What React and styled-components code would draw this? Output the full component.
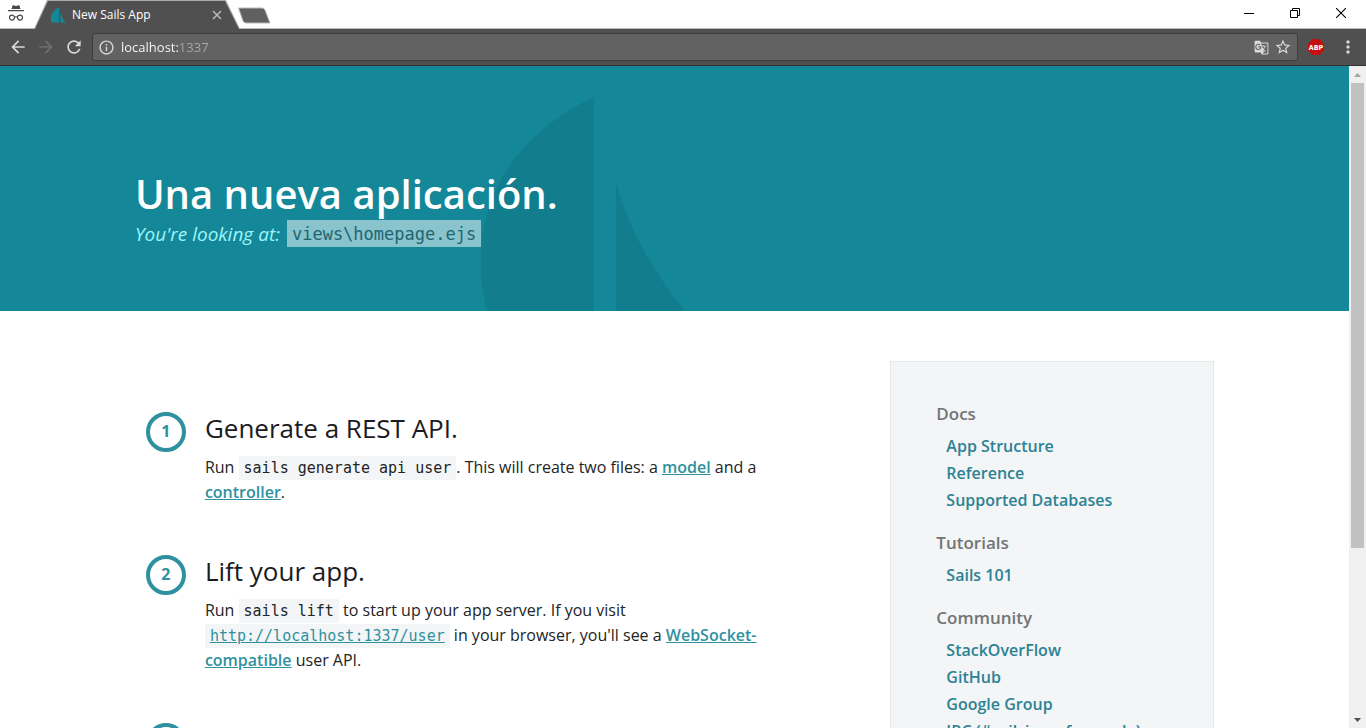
import React from 'react';
import styled, { createGlobalStyle } from 'styled-components';
import {
  MdArrowBack,
  MdArrowForward,
  MdRefresh,
  MdInfoOutline,
  MdGTranslate,
  MdStarBorder,
  MdMoreVert,
} from 'react-icons/md';

const sans = '"Open Sans", "Noto Sans", sans-serif';
const mono = '"DejaVu Sans Mono", "Liberation Mono", monospace';

const GlobalStyle = createGlobalStyle`
  *, *::before, *::after { box-sizing: border-box; }
  body { margin: 0; background: #fff; font-family: ${sans}; }
  h1, h2, h3, p, ul, ol { margin: 0; padding: 0; }
  ul, ol { list-style: none; }
  button { padding: 0; border: 0; background: none; font: inherit; color: inherit; }
  svg { display: block; }
`;

const Window = styled.div`
  display: flex;
  flex-direction: column;
  height: 100vh;
  overflow: hidden;
`;

/* Browser frame */

const TabStrip = styled.div`
  display: flex;
  flex: none;
  height: 29px;
  padding-left: 8px;
  background: linear-gradient(to top, #b9b9b9 1px, #fff 1px);
`;

const Incognito = styled.svg`
  flex: none;
  margin: 5px 10px 0 0;
`;

const TabEdge = styled.div`
  flex: none;
  width: 206px;
  padding-top: 1px;
  background: #a9a9a9;
  clip-path: polygon(13px 0, calc(100% - 14px) 0, 100% 100%, 0 100%);
`;

const Tab = styled.div`
  display: flex;
  align-items: center;
  height: 28px;
  padding: 0 18px 0 16px;
  background: #505050;
  color: #fff;
  font-size: 12px;
  line-height: 26px;
  clip-path: polygon(14px 0, calc(100% - 15px) 0, calc(100% - 1px) 100%, 1px 100%);
`;

const TabTitle = styled.span`
  flex: 1;
  margin-left: 6px;
`;

const NewTab = styled.button`
  flex: none;
  width: 34px;
  height: 17px;
  margin: 7px 0 0 -3px;
`;

const WindowButtons = styled.div`
  display: flex;
  align-items: flex-start;
  margin-left: auto;
  padding-right: 2px;
`;

const WindowButton = styled.button`
  display: grid;
  place-items: center;
  width: 46px;
  height: 26px;
`;

const Toolbar = styled.div`
  display: flex;
  flex: none;
  align-items: center;
  height: 37px;
  padding: 0 4px 0 9px;
  border-bottom: 1px solid #303030;
  background: #505050;
`;

const ToolButton = styled.button`
  display: grid;
  flex: none;
  place-items: center;
  width: ${({ $width }) => $width || 28}px;
  height: 28px;
  color: ${({ $dim }) => ($dim ? '#6f6f6f' : '#d9d9d9')};
`;

const NavButtons = styled.div`
  display: flex;
  margin: 0 4px 0 -5px;
`;

const AddressBar = styled.form`
  display: flex;
  flex: 1;
  align-items: center;
  height: 28px;
  padding: 0 3px 0 5px;
  border: 1px solid #3c3c3c;
  border-radius: 3px;
  background: #626262;
  color: #d9d9d9;
`;

const AddressInput = styled.input`
  flex: 1;
  min-width: 0;
  height: 22px;
  margin-left: 6px;
  padding: 0;
  border: 0;
  outline: 0;
  background: linear-gradient(to right, #fff 59px, #a8a8a8 59px);
  background-clip: text;
  -webkit-text-fill-color: transparent;
  font: 13px/22px ${sans};
`;

/* Page */

const Viewport = styled.div`
  display: flex;
  flex: 1;
  min-height: 0;
`;

const Page = styled.div`
  flex: 1;
  min-width: 0;
  overflow: hidden;
`;

const ScrollTrack = styled.div`
  display: flex;
  flex: none;
  flex-direction: column;
  align-items: center;
  width: 17px;
  background: #f0f0f0;
`;

const ScrollArrow = styled.button`
  display: grid;
  flex: none;
  place-items: center;
  width: 17px;
  height: 17px;
  color: ${({ $dim }) => ($dim ? '#a3a3a3' : '#505050')};
`;

const ScrollLane = styled.div`
  flex: 1;
  width: 13px;
`;

const ScrollThumb = styled.div`
  height: 74%;
  background: #c1c1c1;
`;

const Hero = styled.header`
  position: relative;
  padding: 103px 10% 63px;
  background: #148898;
`;

const SailMark = styled.svg`
  position: absolute;
  bottom: 0;
  left: calc(50% - 194px);
`;

const HeroText = styled.div`
  position: relative;
`;

const HeroTitle = styled.h1`
  margin-bottom: 1px;
  color: #fff;
  font-size: 40px;
  font-weight: 600;
  line-height: 50px;
`;

const HeroNote = styled.p`
  display: flex;
  align-items: flex-start;
  gap: 7px;
  color: #9df5fb;
  font-size: 19px;
  font-style: italic;
  line-height: 28px;
`;

const HeroPath = styled.code`
  padding: 1px 5px 0;
  background: #89c3cb;
  color: #1c6673;
  font-family: ${mono};
  font-size: 17px;
  font-style: normal;
  line-height: 26px;
`;

const Content = styled.main`
  display: grid;
  grid-template-columns: 60% 30%;
  justify-content: space-between;
  align-items: start;
  padding: 50px 10% 0;
`;

const Steps = styled.ol`
  display: grid;
  gap: 50px;
  padding: 51px 0 50px 11px;
`;

const Step = styled.li`
  display: flex;
  align-items: flex-start;
  gap: 19px;
`;

const StepNumber = styled.span`
  flex: none;
  width: 40px;
  height: 40px;
  border: 4px solid #2f919f;
  border-radius: 50%;
  color: #2f919f;
  font-size: 16px;
  font-weight: 700;
  line-height: 31px;
  text-align: center;
`;

const StepTitle = styled.h2`
  margin-bottom: 11px;
  color: #1a1c1e;
  font-size: 26px;
  font-weight: 400;
  line-height: 32px;
`;

const StepText = styled.p`
  color: #222426;
  font-size: 16px;
  line-height: 25px;
`;

const Code = styled.code`
  padding: 3px 5px;
  background: #f4f5f7;
  font-family: ${mono};
  font-size: 15px;
  line-height: 18px;
`;

const TextLink = styled.a`
  color: #2f919f;
  font-weight: ${({ $plain }) => ($plain ? 400 : 600)};
  text-decoration: underline;
`;

const Sidebar = styled.aside`
  padding: 38px 45px;
  border: 1px solid #e5e8e8;
  background: #f3f5f7;
`;

const LinkGroup = styled.section`
  margin-bottom: 15px;
  font-size: 16px;
`;

const GroupTitle = styled.h3`
  margin-bottom: 5px;
  color: #727476;
  font-size: 17px;
  font-weight: 600;
  line-height: 28px;
`;

const GroupLinks = styled.ul`
  padding-left: 10px;
  line-height: 27px;
  white-space: nowrap;
`;

const SideLink = styled.a`
  color: #2c8294;
  font-weight: 600;
  text-decoration: none;
`;

const groups = [
  { title: 'Docs', links: ['App Structure', 'Reference', 'Supported Databases'] },
  { title: 'Tutorials', links: ['Sails 101'] },
  { title: 'Community', links: ['StackOverFlow', 'GitHub', 'Google Group', 'IRC (#sailsjs on freenode)'] },
];

const steps = [
  {
    title: 'Generate a REST API.',
    body: (
      <>
        Run <Code>sails generate api user</Code>. This will create two files: a{' '}
        <TextLink href="#model">model</TextLink> and a <TextLink href="#controller">controller</TextLink>.
      </>
    ),
  },
  {
    title: 'Lift your app.',
    body: (
      <>
        Run <Code>sails lift</Code> to start up your app server. If you visit{' '}
        <Code><TextLink $plain href="#user">http://localhost:1337/user</TextLink></Code> in your browser, you'll see a{' '}
        <TextLink href="#websocket">WebSocket-compatible</TextLink> user API.
      </>
    ),
  },
  { title: 'Dive in.', body: null },
];

function IncognitoIcon() {
  return (
    <Incognito width="16" height="16" viewBox="0 0 16 16" aria-hidden="true">
      <path fill="#4a4a4a" d="M4.5 0.5 Q5 0 6 0.4 L8 0.9 L10 0.4 Q11 0 11.5 0.5 L12.5 4 H3.5 Z M0 5 H16 V6.3 H0 Z" />
      <g fill="none" stroke="#4a4a4a" strokeWidth="1.2">
        <circle cx="4" cy="12.6" r="2.5" />
        <circle cx="12" cy="12.6" r="2.5" />
        <path d="M6.4 12.3 Q8 11.2 9.6 12.3" />
      </g>
    </Incognito>
  );
}

function BrowserFrame() {
  return (
    <>
      <TabStrip>
        <IncognitoIcon />
        <TabEdge>
          <Tab>
            <svg width="16" height="16" viewBox="0 0 16 16" aria-hidden="true">
              <path fill="#148898" d="M9 0.5 V15.5 H1.5 C-0.5 9 3 3 9 0.5 Z M10.3 5 C11.2 9 13 12.5 15.8 15.5 H10.3 Z" />
            </svg>
            <TabTitle>New Sails App</TabTitle>
            <button type="button" aria-label="Close tab">
              <svg width="10" height="10" viewBox="0 0 10 10" stroke="#b4b4b4" strokeWidth="1.6">
                <path d="M1 1 L9 9 M9 1 L1 9" />
              </svg>
            </button>
          </Tab>
        </TabEdge>
        <NewTab type="button" aria-label="New tab">
          <svg width="34" height="17" viewBox="0 0 34 17">
            <path d="M1.5 1 H25 Q27 1 28 3 L33 16 H9 Q7 16 6 14 Z" fill="#606060" stroke="#b9b9b9" />
          </svg>
        </NewTab>
        <WindowButtons>
          <WindowButton type="button" aria-label="Minimize">
            <svg width="10" height="10" viewBox="0 0 10 10" stroke="#000"><path d="M0 5.5 H10" /></svg>
          </WindowButton>
          <WindowButton type="button" aria-label="Restore">
            <svg width="10" height="10" viewBox="0 0 10 10" fill="none" stroke="#000">
              <path d="M0.5 2.5 H7.5 V9.5 H0.5 Z M2.5 2.5 V0.5 H9.5 V7.5 H7.5" />
            </svg>
          </WindowButton>
          <WindowButton type="button" aria-label="Close">
            <svg width="10" height="10" viewBox="0 0 10 10" stroke="#000" strokeWidth="1.1">
              <path d="M0 0 L10 10 M10 0 L0 10" />
            </svg>
          </WindowButton>
        </WindowButtons>
      </TabStrip>
      <Toolbar>
        <NavButtons>
          <ToolButton type="button" aria-label="Back"><MdArrowBack size={20} /></ToolButton>
          <ToolButton type="button" aria-label="Forward" $dim><MdArrowForward size={20} /></ToolButton>
          <ToolButton type="button" aria-label="Reload"><MdRefresh size={20} /></ToolButton>
        </NavButtons>
        <AddressBar>
          <MdInfoOutline size={17} />
          <AddressInput type="text" aria-label="Address" defaultValue="localhost:1337" />
          <ToolButton type="button" aria-label="Translate" $width={22}><MdGTranslate size={15} /></ToolButton>
          <ToolButton type="button" aria-label="Bookmark" $width={22}><MdStarBorder size={18} /></ToolButton>
        </AddressBar>
        <ToolButton type="button" aria-label="Adblock Plus" $width={36}>
          <svg width="16" height="16" viewBox="0 0 16 16">
            <path fill="#c70d0f" d="M4.7 0 H11.3 L16 4.7 V11.3 L11.3 16 H4.7 L0 11.3 V4.7 Z" />
            <text x="8" y="11" textAnchor="middle" fill="#fff" fontFamily="DejaVu Sans Condensed, Open Sans, sans-serif" fontSize="7" fontWeight="700">ABP</text>
          </svg>
        </ToolButton>
        <ToolButton type="button" aria-label="Menu"><MdMoreVert size={20} /></ToolButton>
      </Toolbar>
    </>
  );
}

function Scrollbar() {
  return (
    <ScrollTrack>
      <ScrollArrow type="button" aria-label="Scroll up" $dim>
        <svg width="7" height="4" viewBox="0 0 7 4"><path fill="currentColor" d="M3.5 0 L7 4 H0 Z" /></svg>
      </ScrollArrow>
      <ScrollLane><ScrollThumb /></ScrollLane>
      <ScrollArrow type="button" aria-label="Scroll down">
        <svg width="7" height="4" viewBox="0 0 7 4"><path fill="currentColor" d="M0 0 H7 L3.5 4 Z" /></svg>
      </ScrollArrow>
    </ScrollTrack>
  );
}

export default function App() {
  return (
    <Window>
      <GlobalStyle />
      <BrowserFrame />
      <Viewport>
        <Page>
          <Hero>
            <SailMark width="205" height="214" viewBox="0 0 205 214" fill="#117d8d" aria-hidden="true">
              <path d="M113 0 V214 H6 C-12 144 4 52 113 0 Z" />
              <path d="M135 85 C148 133 172 175 204 214 H135 Z" />
            </SailMark>
            <HeroText>
              <HeroTitle>Una nueva aplicación.</HeroTitle>
              <HeroNote>
                You're looking at: <HeroPath>views\homepage.ejs</HeroPath>
              </HeroNote>
            </HeroText>
          </Hero>
          <Content>
            <Steps>
              {steps.map((step, index) => (
                <Step key={step.title}>
                  <StepNumber>{index + 1}</StepNumber>
                  <div>
                    <StepTitle>{step.title}</StepTitle>
                    <StepText>{step.body}</StepText>
                  </div>
                </Step>
              ))}
            </Steps>
            <Sidebar>
              {groups.map((group) => (
                <LinkGroup key={group.title}>
                  <GroupTitle>{group.title}</GroupTitle>
                  <GroupLinks>
                    {group.links.map((label) => (
                      <li key={label}><SideLink href="#docs">{label}</SideLink></li>
                    ))}
                  </GroupLinks>
                </LinkGroup>
              ))}
            </Sidebar>
          </Content>
        </Page>
        <Scrollbar />
      </Viewport>
    </Window>
  );
}
